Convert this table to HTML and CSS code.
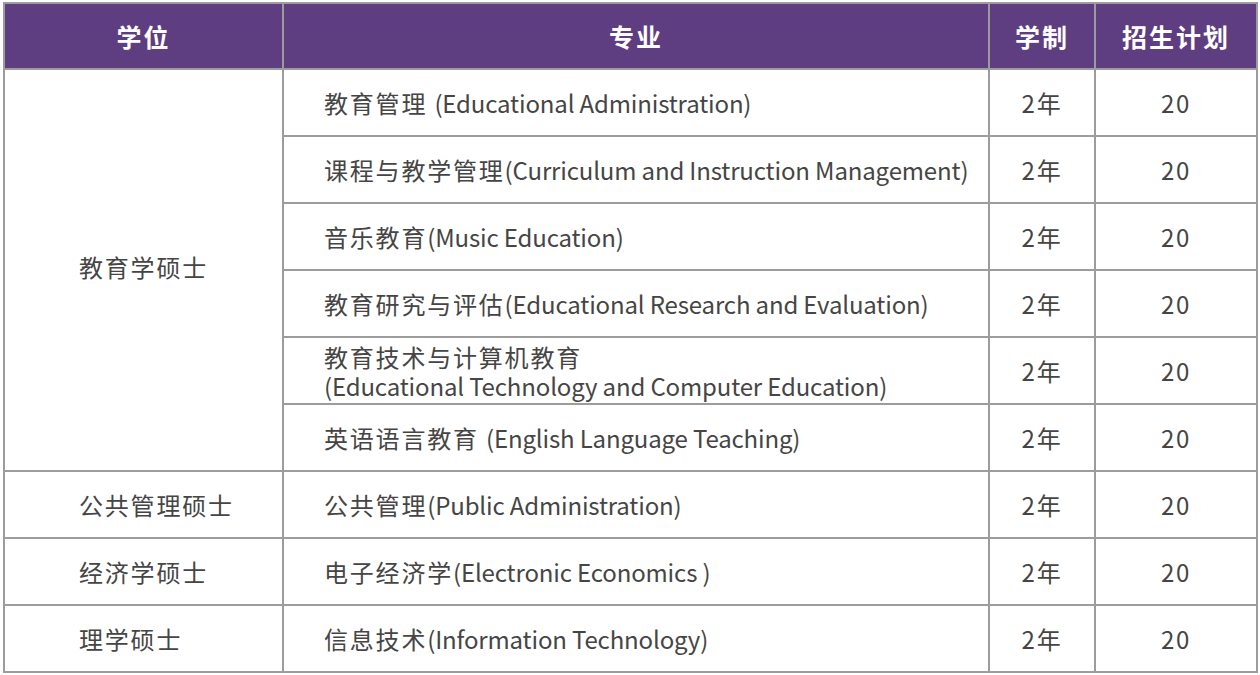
FILE: index.html
```html
<!DOCTYPE html>
<html lang="zh-CN">
<head>
<meta charset="utf-8">
<title>招生计划</title>
<link rel="stylesheet" href="styles.css">
</head>
<body>
<div class="wrap">
<table class="plan">
  <colgroup>
    <col class="c-degree">
    <col class="c-major">
    <col class="c-len">
    <col class="c-quota">
  </colgroup>
  <thead>
    <tr><th>学位</th><th>专业</th><th>学制</th><th>招生计划</th></tr>
  </thead>
  <tbody>
    <tr><td class="degree group" rowspan="6">教育学硕士</td><td class="major">教育管理 <span class="en">(Educational Administration)</span></td><td class="num">2年</td><td class="num">20</td></tr>
    <tr><td class="major">课程与教学管理<span class="en">(Curriculum and Instruction Management)</span></td><td class="num">2年</td><td class="num">20</td></tr>
    <tr><td class="major">音乐教育<span class="en">(Music Education)</span></td><td class="num">2年</td><td class="num">20</td></tr>
    <tr><td class="major">教育研究与评估<span class="en">(Educational Research and Evaluation)</span></td><td class="num">2年</td><td class="num">20</td></tr>
    <tr><td class="major">教育技术与计算机教育<br><span class="en">(Educational Technology and Computer Education)</span></td><td class="num">2年</td><td class="num">20</td></tr>
    <tr><td class="major">英语语言教育 <span class="en">(English Language Teaching)</span></td><td class="num">2年</td><td class="num">20</td></tr>
    <tr><td class="degree">公共管理硕士</td><td class="major">公共管理<span class="en">(Public Administration)</span></td><td class="num">2年</td><td class="num">20</td></tr>
    <tr><td class="degree">经济学硕士</td><td class="major">电子经济学<span class="en">(Electronic Economics )</span></td><td class="num">2年</td><td class="num">20</td></tr>
    <tr><td class="degree">理学硕士</td><td class="major">信息技术<span class="en">(Information Technology)</span></td><td class="num">2年</td><td class="num">20</td></tr>
  </tbody>
</table>
</div>
</body>
</html>
```

FILE: styles.css
```css
html, body {
  margin: 0;
  padding: 0;
  background: #ffffff;
}
.wrap {
  padding: 2px 3px 0 3px;
}
.plan {
  width: 1253px;
  border-collapse: collapse;
  table-layout: fixed;
  font-family: "Noto Sans CJK SC", "Noto Sans", sans-serif;
  color: #454545;
  font-size: 24px;
  letter-spacing: 1.8px;
}
.c-degree { width: 279px; }
.c-major { width: 706px; }
.c-len { width: 106px; }
.c-quota { width: 162px; }
.plan th,
.plan td {
  border: 2px solid #9c9c9c;
  padding: 0;
}
.plan th {
  background: #5e3d80;
  color: #ffffff;
  font-weight: 700;
  font-size: 25px;
  letter-spacing: 2px;
  height: 64px;
  text-align: center;
}
.plan td {
  height: 65px;
  line-height: 29px;
}
.en {
  letter-spacing: -0.15px;
}
.degree {
  padding-left: 74px !important;
  text-align: left;
}
.group {
  padding-bottom: 7px !important;
}
.major {
  padding-left: 40px !important;
  text-align: left;
}
.num {
  text-align: center;
}
```
